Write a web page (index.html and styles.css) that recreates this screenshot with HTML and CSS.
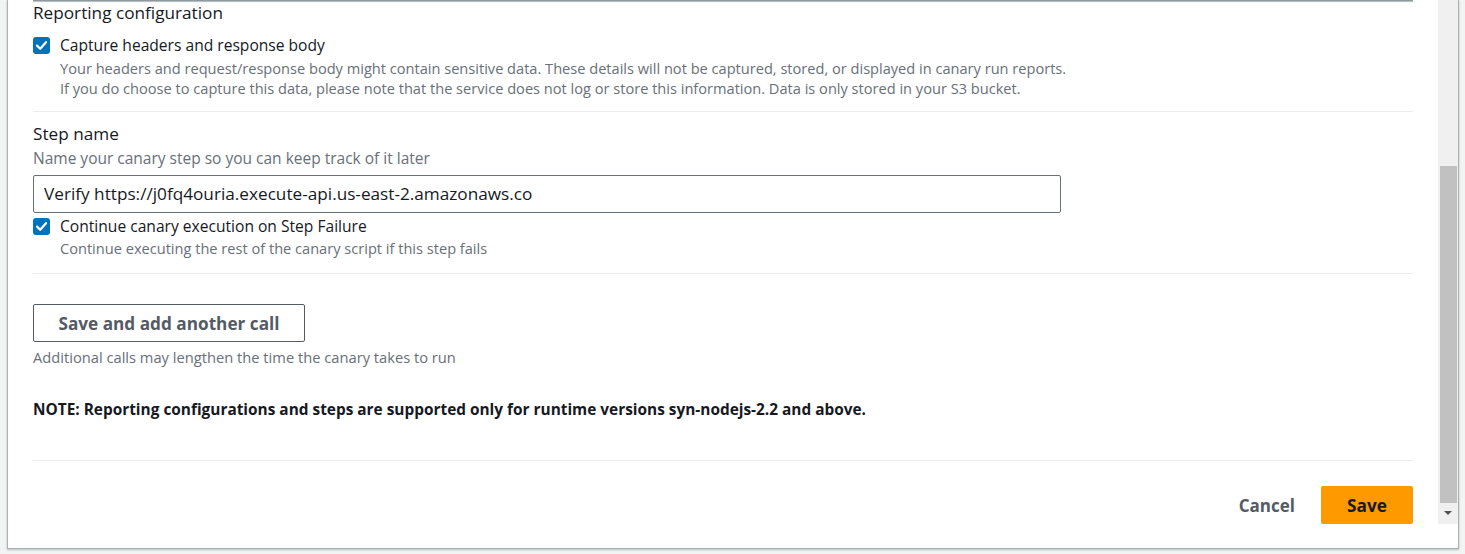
FILE: index.html
```html
<!DOCTYPE html>
<html>
<head>
<meta charset="utf-8">
<link rel="stylesheet" href="styles.css">
</head>
<body>
<div class="modal">
  <div class="content">
    <div class="prev-edge"></div>
    <h3 class="section-title">Reporting configuration</h3>
    <div class="check-row first">
      <span class="checkbox"><svg viewBox="0 0 17 17" width="17" height="17"><path d="M4 8.6 L7.2 11.8 L13 5.2" fill="none" stroke="#fff" stroke-width="2.2" stroke-linecap="round" stroke-linejoin="round"/></svg></span>
      <div class="check-text">
        <div class="check-label">Capture headers and response body</div>
        <div class="desc">Your headers and request/response body might contain sensitive data. These details will not be captured, stored, or displayed in canary run reports.<br>If you do choose to capture this data, please note that the service does not log or store this information. Data is only stored in your S3 bucket.</div>
      </div>
    </div>
    <div class="divider d1"></div>
    <div class="field-label">Step name</div>
    <div class="field-desc">Name your canary step so you can keep track of it later</div>
    <div class="input">Verify https://j0fq4ouria.execute-api.us-east-2.amazonaws.co</div>
    <div class="check-row second">
      <span class="checkbox"><svg viewBox="0 0 17 17" width="17" height="17"><path d="M4 8.6 L7.2 11.8 L13 5.2" fill="none" stroke="#fff" stroke-width="2.2" stroke-linecap="round" stroke-linejoin="round"/></svg></span>
      <div class="check-text">
        <div class="check-label">Continue canary execution on Step Failure</div>
        <div class="desc tight">Continue executing the rest of the canary script if this step fails</div>
      </div>
    </div>
    <div class="divider d2"></div>
    <button class="btn-normal">Save and add another call</button>
    <div class="hint">Additional calls may lengthen the time the canary takes to run</div>
    <div class="note">NOTE: Reporting configurations and steps are supported only for runtime versions syn-nodejs-2.2 and above.</div>
    <div class="divider d3"></div>
    <div class="footer">
      <button class="btn-link">Cancel</button>
      <button class="btn-primary">Save</button>
    </div>
  </div>
  <div class="scrollbar">
    <div class="thumb"></div>
    <div class="arrow"></div>
  </div>
</div>
</body>
</html>
```

FILE: styles.css
```css
html, body {
  margin: 0;
  padding: 0;
}
body {
  background: #f2f3f3;
  width: 1465px;
  height: 554px;
  overflow: hidden;
  font-family: "Open Sans", Roboto, Arial, sans-serif;
  color: #16191f;
}
.modal {
  margin-left: 7px;
  width: 1452px;
  height: 549px;
  box-sizing: border-box;
  background: #fff;
  border: 1px solid #a9b2b3;
  border-top: none;
  box-shadow: 0 1px 2px rgba(0, 28, 36, 0.25);
  display: flex;
}
.content {
  width: 1380px;
  margin-left: 25px;
  display: flex;
  flex-direction: column;
}
.prev-edge {
  height: 1px;
  background: #8d9a9b;
  box-shadow: 0 1px 1px rgba(0, 28, 36, 0.35);
}
.section-title {
  margin: 1px 0 0;
  font-size: 17.2px;
  line-height: 22px;
  font-weight: 400;
}
.check-row {
  display: flex;
  align-items: flex-start;
}
.check-row.first {
  margin-top: 10px;
}
.check-row.second {
  margin-top: 2px;
}
.checkbox {
  width: 17px;
  height: 17px;
  border-radius: 3px;
  background: #0073bb;
  margin-top: 3px;
  flex: none;
  display: flex;
}
.check-text {
  margin-left: 10px;
}
.check-label {
  font-size: 15.6px;
  line-height: 22px;
}
.desc {
  margin-top: 2px;
  font-size: 14.6px;
  line-height: 20px;
  color: #687078;
}
.desc.tight {
  margin-top: 1px;
}
.divider {
  height: 1px;
  background: #eaeded;
}
.d1 { margin-top: 13px; }
.d2 { margin-top: 15px; }
.d3 { margin-top: 40px; }
.field-label {
  margin-top: 11px;
  font-size: 17.2px;
  line-height: 22px;
}
.field-desc {
  margin-top: 3px;
  font-size: 15.5px;
  line-height: 20px;
  color: #687078;
}
.input {
  margin-top: 7px;
  width: 1028px;
  height: 38px;
  box-sizing: border-box;
  border: 1px solid #687078;
  border-radius: 2px;
  padding: 0 10px;
  font-size: 17.2px;
  line-height: 36px;
  color: #16191f;
}
.btn-normal {
  margin-top: 30px;
  align-self: flex-start;
  width: 272px;
  height: 38px;
  box-sizing: border-box;
  background: #fff;
  border: 1px solid #545b64;
  border-radius: 2px;
  font-family: inherit;
  font-size: 17.2px;
  font-weight: 700;
  color: #545b64;
  padding: 0;
}
.hint {
  margin-top: 5px;
  font-size: 14.7px;
  line-height: 20px;
  color: #687078;
}
.note {
  margin-top: 33px;
  font-size: 15.4px;
  line-height: 20px;
  font-weight: 700;
}
.footer {
  margin-top: 25px;
  display: flex;
  justify-content: flex-end;
  align-items: center;
}
.btn-link {
  background: none;
  border: none;
  font-family: inherit;
  font-size: 17px;
  font-weight: 700;
  color: #545b64;
  padding: 0;
  margin-right: 26px;
}
.btn-primary {
  width: 92px;
  height: 38px;
  background: #ff9900;
  border: none;
  border-radius: 2px;
  font-family: inherit;
  font-size: 17.2px;
  font-weight: 700;
  color: #16191f;
  padding: 0;
}
.scrollbar {
  margin-left: 25px;
  width: 20px;
  height: 524px;
  background: #f0f0f0;
  position: relative;
}
.thumb {
  position: absolute;
  left: 2px;
  top: 166px;
  width: 17px;
  height: 337px;
  background: #c1c1c1;
}
.arrow {
  position: absolute;
  left: 6px;
  top: 511px;
  width: 0;
  height: 0;
  border-left: 4px solid transparent;
  border-right: 4px solid transparent;
  border-top: 4px solid #505050;
}
```
